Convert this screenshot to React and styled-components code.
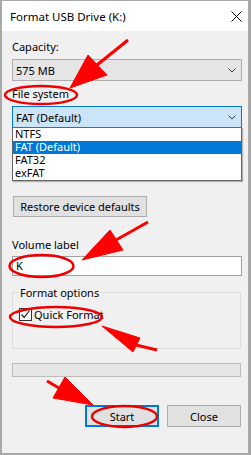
import React from "react";
import styled, { createGlobalStyle } from "styled-components";

const GlobalStyle = createGlobalStyle`
  html, body {
    margin: 0;
    padding: 0;
    background: #ffffff;
  }
  body {
    font-family: "Noto Sans", "Liberation Sans", sans-serif;
    font-size: 11px;
    color: #000;
  }
`;

const Window = styled.div`
  position: relative;
  box-sizing: border-box;
  width: 251px;
  height: 455px;
  background: #f0f0f0;
  border: 2px solid #a8a8a8;
  border-top-width: 1px;
  border-right-width: 3px;
  display: flex;
  flex-direction: column;
`;

const TitleBar = styled.div`
  height: 30px;
  background: #ffffff;
  display: flex;
  align-items: center;
  justify-content: space-between;
  padding: 0 6px 0 8px;
  font-size: 11.5px;
  line-height: 15px;
  flex-shrink: 0;
`;

const Body = styled.div`
  padding: 0 6px 0 10px;
  display: flex;
  flex-direction: column;
`;

const Label = styled.div`
  line-height: 15px;
  margin-top: ${(p) => p.$top || 5}px;
`;

const ComboWrap = styled.div`
  position: relative;
  margin-top: 5px;
`;

const Combo = styled.div`
  box-sizing: border-box;
  height: 22px;
  border: 1px solid ${(p) => (p.$focused ? "#0078d7" : "#adadad")};
  background: ${(p) => (p.$focused ? "#cce4f7" : "#e5e5e5")};
  display: flex;
  align-items: center;
  justify-content: space-between;
  padding: 0 5px 0 3px;
  line-height: 15px;
`;

const DropList = styled.ul`
  position: absolute;
  left: 0;
  right: 0;
  top: 21px;
  margin: 0;
  padding: 0;
  list-style: none;
  background: #ffffff;
  border: 1px solid #646464;
  box-shadow: 1px 1px 1px rgba(0, 0, 0, 0.25);
  z-index: 2;
`;

const DropItem = styled.li`
  height: 13px;
  line-height: 12px;
  padding-left: 2px;
  background: ${(p) => (p.$selected ? "#0078d7" : "transparent")};
  color: ${(p) => (p.$selected ? "#ffffff" : "#000")};
`;

const Button = styled.button`
  box-sizing: border-box;
  font: inherit;
  line-height: 15px;
  padding: 0;
  width: ${(p) => p.$width}px;
  height: ${(p) => p.$height || 22}px;
  background: #e1e1e1;
  border: ${(p) => (p.$default ? "2px solid #0078d7" : "1px solid #adadad")};
  color: #000;
`;

const RestoreRow = styled.div`
  margin-top: 68px;
  padding-left: 1px;
  display: flex;
`;

const TextBox = styled.div`
  box-sizing: border-box;
  height: 20px;
  margin-top: 4px;
  background: #ffffff;
  border: 1px solid #a0a0a0;
  padding-left: 3px;
  line-height: 17px;
`;

const Group = styled.fieldset`
  margin: 9px 1px 0 0;
  padding: 0 0 26px 6px;
  border: 1px solid #dcdcdc;
  min-width: 0;
`;

const Legend = styled.legend`
  padding: 0 1px;
  line-height: 15px;
`;

const CheckRow = styled.div`
  margin-top: 7px;
  display: flex;
  align-items: center;
  gap: 2px;
  line-height: 15px;
`;

const CheckBox = styled.span`
  box-sizing: border-box;
  width: 13px;
  height: 13px;
  border: 1px solid #333333;
  background: #ffffff;
  display: flex;
  align-items: center;
  justify-content: center;
`;

const Progress = styled.div`
  box-sizing: border-box;
  height: 14px;
  margin: 14px 1px 0 0;
  background: #e6e6e6;
  border: 1px solid #bcbcbc;
`;

const ButtonRow = styled.div`
  margin-top: 28px;
  display: flex;
  justify-content: flex-end;
  gap: 8px;
  padding-right: 1px;
`;

const Overlay = styled.svg`
  position: absolute;
  left: -2px;
  top: -1px;
  pointer-events: none;
  z-index: 5;
`;

const Chevron = () => (
  <svg width="8" height="5" viewBox="0 0 8 5">
    <path d="M0.5 0.5 L4 4 L7.5 0.5" fill="none" stroke="#3c3c3c" strokeWidth="1" />
  </svg>
);

const arrows = [
  { tail: [128, 40], neck: [97, 65], head: "70,88 88,55 107,75" },
  { tail: [148, 222], neck: [116, 240], head: "82,260 110,230 123,250" },
  { tail: [157, 350], neck: [136, 345], head: "102,326 140,338 133,352" },
  { tail: [47, 381], neck: [59, 388], head: "93,405 65,377 53,398" },
];

const rings = [
  { cx: 41, cy: 95, rx: 36, ry: 9 },
  { cx: 41.5, cy: 266, rx: 32, ry: 11 },
  { cx: 56, cy: 317, rx: 46, ry: 10 },
  { cx: 124.5, cy: 416.5, rx: 32.5, ry: 10.5 },
];

export default function App() {
  return (
    <>
      <GlobalStyle />
      <Window>
        <TitleBar>
          <span>Format USB Drive (K:)</span>
          <svg width="11" height="11" viewBox="0 0 11 11">
            <path d="M0.5 0.5 L10.5 10.5 M10.5 0.5 L0.5 10.5" stroke="#000" strokeWidth="1" />
          </svg>
        </TitleBar>
        <Body>
          <Label $top={8}>Capacity:</Label>
          <ComboWrap>
            <Combo>
              <span>575 MB</span>
              <Chevron />
            </Combo>
          </ComboWrap>
          <Label>File system</Label>
          <ComboWrap>
            <Combo $focused>
              <span>FAT (Default)</span>
              <Chevron />
            </Combo>
            <DropList>
              <DropItem>NTFS</DropItem>
              <DropItem $selected>FAT (Default)</DropItem>
              <DropItem>FAT32</DropItem>
              <DropItem>exFAT</DropItem>
            </DropList>
          </ComboWrap>
          <RestoreRow>
            <Button $width={134} $height={21}>Restore device defaults</Button>
          </RestoreRow>
          <Label $top={20}>Volume label</Label>
          <TextBox>K</TextBox>
          <Group>
            <Legend>Format options</Legend>
            <CheckRow>
              <CheckBox>
                <svg width="11" height="11" viewBox="0 0 11 11">
                  <path d="M1.5 5.5 L4.2 8.5 L9.5 1.5" fill="none" stroke="#222" strokeWidth="1.2" />
                </svg>
              </CheckBox>
              <span>Quick Format</span>
            </CheckRow>
          </Group>
          <Progress />
          <ButtonRow>
            <Button $width={74} $default>Start</Button>
            <Button $width={74}>Close</Button>
          </ButtonRow>
        </Body>
        <Overlay width="252" height="455" viewBox="0 0 252 455">
          {rings.map((r, i) => (
            <ellipse key={i} cx={r.cx} cy={r.cy} rx={r.rx} ry={r.ry} fill="none" stroke="#ee0000" strokeWidth="2.5" />
          ))}
          {arrows.map((a, i) => (
            <g key={i} fill="#ff0000" stroke="#ff0000">
              <line x1={a.tail[0]} y1={a.tail[1]} x2={a.neck[0]} y2={a.neck[1]} strokeWidth="3" />
              <polygon points={a.head} strokeWidth="1" strokeLinejoin="miter" />
            </g>
          ))}
        </Overlay>
      </Window>
    </>
  );
}
